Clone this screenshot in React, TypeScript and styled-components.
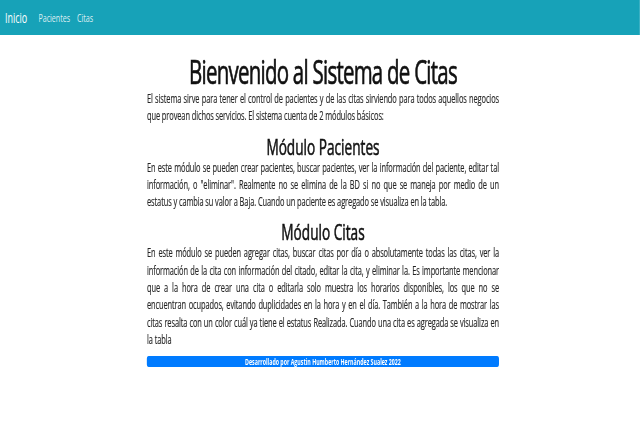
import React from 'react';
import styled, { createGlobalStyle } from 'styled-components';

// the whole page is drawn narrow: laid out wide, then squeezed horizontally
const K = 0.62;

const GlobalStyle = createGlobalStyle`
  html, body {
    margin: 0;
    padding: 0;
    background: #fff;
    overflow: hidden;
  }
  body {
    font-family: "Open Sans", "Noto Sans", sans-serif;
    color: #212529;
  }
`;

const Page = styled.div`
  width: ${640 / K}px;
  height: 426px;
  transform: scaleX(${K});
  transform-origin: 0 0;
`;

const Navbar = styled.nav`
  height: 35px;
  background: #17a2b8;
  display: flex;
  align-items: center;
  padding: 0 0 0 8px;
`;

const Brand = styled.a`
  color: #fff;
  font-size: 14.5px;
  text-decoration: none;
  margin-right: 18px;
`;

const NavLinks = styled.div`
  display: flex;
  gap: 11px;
`;

const NavLink = styled.a`
  color: rgba(255, 255, 255, 0.85);
  font-size: 11.5px;
  text-decoration: none;
`;

const Main = styled.main`
  width: ${352 / K}px;
  margin: 0 auto;
  padding-top: 19px;
  transform: translateX(${3 / K}px);
`;

const Title = styled.h1`
  margin: 0;
  text-align: center;
  font-weight: 400;
  font-size: 33px;
  line-height: 36px;
  letter-spacing: -1.2px;
  color: #111;
  -webkit-text-stroke: 0.7px #111;
`;

const Heading = styled.h2`
  margin: 8px 0 0;
  text-align: center;
  font-weight: 400;
  font-size: 22px;
  line-height: 26px;
  letter-spacing: 0;
  color: #111;
  -webkit-text-stroke: 0.6px #111;
`;

const Para = styled.p`
  margin: 0;
  font-size: 12px;
  line-height: 17.3px;
  letter-spacing: -0.15px;
  text-align: justify;
  color: #262626;
  -webkit-text-stroke: 0.15px #262626;
`;

const Footer = styled.div`
  margin-top: 8px;
  height: 11px;
  background: #007bff;
  border-radius: 3px;
  color: #fff;
  font-size: 8.5px;
  font-weight: 700;
  line-height: 11px;
  text-align: center;
`;

export default function App() {
  return (
    <>
      <GlobalStyle />
      <Page>
        <Navbar>
          <Brand href="#">Inicio</Brand>
          <NavLinks>
            <NavLink href="#">Pacientes</NavLink>
            <NavLink href="#">Citas</NavLink>
          </NavLinks>
        </Navbar>
        <Main>
          <Title>Bienvenido al Sistema de Citas</Title>
          <Para>
            El sistema sirve para tener el control de pacientes y de las citas sirviendo para todos aquellos
            negocios que provean dichos servicios. El sistema cuenta de 2 módulos básicos:
          </Para>
          <Heading>Módulo Pacientes</Heading>
          <Para>
            En este módulo se pueden crear pacientes, buscar pacientes, ver la información del paciente, editar
            tal información, o "eliminar". Realmente no se elimina de la BD si no que se maneja por medio de un
            estatus y cambia su valor a Baja. Cuando un paciente es agregado se visualiza en la tabla.
          </Para>
          <Heading>Módulo Citas</Heading>
          <Para>
            En este módulo se pueden agregar citas, buscar citas por día o absolutamente todas las citas, ver la
            información de la cita con información del citado, editar la cita, y eliminar la. Es importante
            mencionar que a la hora de crear una cita o editarla solo muestra los horarios disponibles, los que no
            se encuentran ocupados, evitando duplicidades en la hora y en el día. También a la hora de mostrar las
            citas resalta con un color cuál ya tiene el estatus Realizada. Cuando una cita es agregada se visualiza
            en la tabla
          </Para>
          <Footer>Desarrollado por Agustin Humberto Hernández Sualez 2022</Footer>
        </Main>
      </Page>
    </>
  );
}
